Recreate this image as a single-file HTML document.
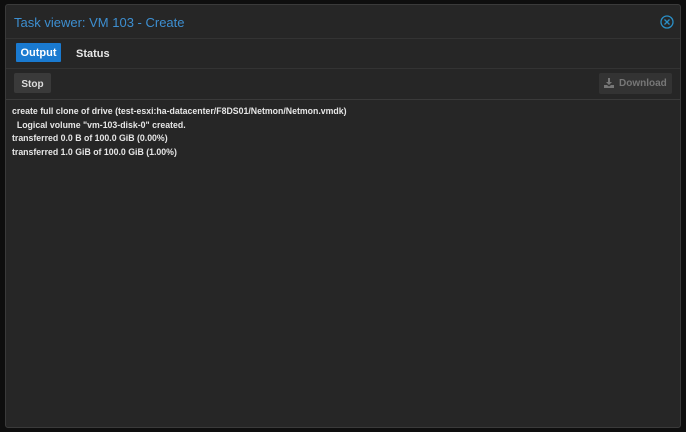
<!DOCTYPE html>
<html><head><style>
body{margin:0;width:686px;height:432px;background:#0e0e0e;font-family:"Liberation Sans",sans-serif;overflow:hidden;position:relative}
.win{position:absolute;left:5px;top:4px;width:674px;height:422px;background:#262626;border:1px solid #3a3a3a;border-radius:3px}
.hdr{position:absolute;left:0;top:0;right:0;height:33px;border-bottom:1px solid #333}
.title{position:absolute;left:8px;top:10px;color:#3d8fd1;font-size:13px}
.close{position:absolute;right:6px;top:10px}
.tabs{position:absolute;left:0;top:34px;right:0;height:29px;border-bottom:1px solid #333}
.out{position:absolute;left:10px;top:4px;width:45px;height:19px;background:#1a7ad0;color:#fff;font-size:11px;font-weight:bold;text-align:center;line-height:21px;border-radius:1px}
.st{position:absolute;left:70px;top:9px;color:#e8e8e8;font-size:11px;font-weight:bold}
.tb{position:absolute;left:0;top:64px;right:0;height:30px;border-bottom:1px solid #3a3a3a}
.stop{position:absolute;left:8px;top:4px;width:37px;height:20px;background:#3a3a3a;border-radius:2px;color:#ddd;font-size:10px;font-weight:bold;text-align:center;line-height:23px}
.dl{position:absolute;right:8px;top:4px;width:73px;height:21px;background:#333;border-radius:2px;color:#777;font-size:10px;font-weight:bold;line-height:22px}
.log{position:absolute;left:6px;top:100px;color:#e6e6e6;font-size:8.75px;font-weight:bold;line-height:13.6px;white-space:pre}
</style></head><body>
<div class="win">
<div class="hdr"><div class="title">Task viewer: VM 103 - Create</div>
<svg class="close" width="14" height="14" viewBox="0 0 14 14"><circle cx="7" cy="7" r="6" fill="none" stroke="#2a8fc7" stroke-width="1.3"/><path d="M4.5 4.5L9.5 9.5M9.5 4.5L4.5 9.5" stroke="#2a8fc7" stroke-width="1.3"/></svg></div>
<div class="tabs"><div class="out">Output</div><div class="st">Status</div></div>
<div class="tb"><div class="stop">Stop</div>
<div class="dl"><svg style="position:absolute;left:5px;top:5px" width="10" height="10" viewBox="0 0 10 10"><path d="M4 0h2v4h2L5 7 2 4h2z M0 7h3l2 1.5L7 7h3v3H0z" fill="#777"/></svg><span style="position:absolute;left:20px">Download</span></div></div>
<div class="log">create full clone of drive (test-esxi:ha-datacenter/F8DS01/Netmon/Netmon.vmdk)
  Logical volume "vm-103-disk-0" created.
transferred 0.0 B of 100.0 GiB (0.00%)
transferred 1.0 GiB of 100.0 GiB (1.00%)</div>
</div>
</body></html>
